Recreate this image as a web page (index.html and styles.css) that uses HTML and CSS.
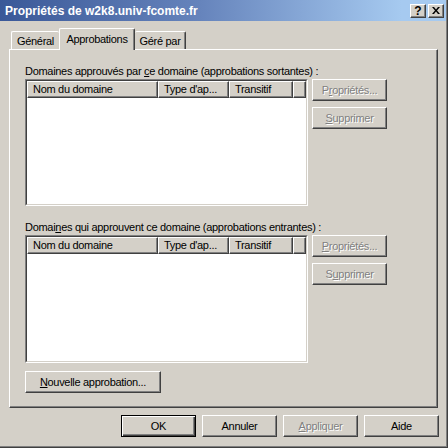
FILE: index.html
```html
<!DOCTYPE html>
<html>

<head>
    <meta charset="utf-8">
    <link rel="stylesheet" href="styles.css">
</head>

<body>
    <div id="window">
        <div id="titlebar">
            <span class="title">Propriétés de w2k8.univ-fcomte.fr</span>
            <div class="capbtns">
                <div class="capbtn help">?</div>
                <div class="capbtn close">
                    <svg width="8" height="7" viewBox="0 0 8 7">
                        <path d="M0 0h2l2 2.5L6 0h2L5 3.5 8 7H6L4 4.5 2 7H0l3-3.5z" fill="#000"/>
                    </svg>
                </div>
            </div>
        </div>

        <div id="tabs">
            <div class="tab tab-general">Général</div>
            <div class="tab tab-active">Approbations</div>
            <div class="tab tab-gere">Géré par</div>
        </div>

        <div id="panel">
            <p class="label">Domaines approuvés par <u>c</u>e domaine (approbations sortantes) :</p>
            <div class="row">
                <div class="list">
                    <div class="list-inner">
                        <div class="header">
                            <div class="col col-nom">Nom du domaine</div>
                            <div class="col col-type">Type d'ap...</div>
                            <div class="col col-trans">Transitif</div>
                            <div class="col col-rest"></div>
                        </div>
                    </div>
                </div>
                <div class="side">
                    <div class="btn disabled">P<u>r</u>opriétés...</div>
                    <div class="btn disabled"><u>S</u>upprimer</div>
                </div>
            </div>

            <p class="label label2">Domai<u>n</u>es qui approuvent ce domaine (approbations entrantes) :</p>
            <div class="row">
                <div class="list list2">
                    <div class="list-inner">
                        <div class="header">
                            <div class="col col-nom">Nom du domaine</div>
                            <div class="col col-type">Type d'ap...</div>
                            <div class="col col-trans">Transitif</div>
                            <div class="col col-rest"></div>
                        </div>
                    </div>
                </div>
                <div class="side">
                    <div class="btn disabled"><u>P</u>ropriétés...</div>
                    <div class="btn disabled">S<u>u</u>pprimer</div>
                </div>
            </div>

            <div class="btn btn-new"><u>N</u>ouvelle approbation...</div>
        </div>

        <div id="bottom">
            <div class="btn btn-default">OK</div>
            <div class="btn">Annuler</div>
            <div class="btn disabled"><u>A</u>ppliquer</div>
            <div class="btn">Aide</div>
        </div>
    </div>
</body>

</html>
```

FILE: styles.css
```css
body {
    margin: 0px;
    background: #d4d0c8;
    font-family: "Liberation Sans", Tahoma, sans-serif;
    font-size: 11px;
    letter-spacing: -0.3px;
    color: #000;
}

p {
    margin: 0px;
}

#window {
    width: 448px;
    height: 448px;
    box-sizing: border-box;
    border-right: 1px solid #404040;
    border-bottom: 1px solid #404040;
    box-shadow: inset -1px -1px #808080;
    display: flex;
    flex-direction: column;
}

#titlebar {
    height: 21px;
    margin-right: 1px;
    display: flex;
    align-items: center;
    justify-content: space-between;
    padding: 0px 2px 0px 5px;
    background: linear-gradient(to right, #3a5898 0%, #6684bc 45%, #a6caf0 90%);
    color: #fff;
    font-size: 12px;
    font-weight: bold;
    letter-spacing: 0px;
}

.capbtns {
    display: flex;
    gap: 2px;
}

.capbtn {
    width: 16px;
    height: 14px;
    box-sizing: border-box;
    background: #d4d0c8;
    border: 1px solid;
    border-color: #fff #404040 #404040 #fff;
    box-shadow: inset -1px -1px #808080;
    display: flex;
    align-items: center;
    justify-content: center;
    color: #000;
    font-size: 12px;
    font-weight: bold;
    line-height: 12px;
}

.close svg {
    display: block;
}

#tabs {
    display: flex;
    align-items: flex-end;
    height: 21px;
    margin-top: 7px;
    padding-left: 11px;
}

.tab {
    height: 18px;
    box-sizing: border-box;
    border: 1px solid;
    border-bottom: 0;
    border-color: #fff #404040 #fff #fff;
    border-radius: 2px 2px 0px 0px;
    box-shadow: inset -1px 0px #808080;
    display: flex;
    align-items: center;
    justify-content: center;
}

.tab-general {
    width: 48px;
    border-right: 0;
    box-shadow: none;
}

.tab-active {
    width: 76px;
    height: 22px;
    margin-bottom: -1px;
    background: #d4d0c8;
    position: relative;
    z-index: 1;
    padding-bottom: 2px;
}

.tab-gere {
    width: 51px;
    border-left: 0;
}

#panel {
    margin-left: 9px;
    width: 429px;
    height: 359px;
    box-sizing: border-box;
    border: 1px solid;
    border-color: #fff #404040 #404040 #fff;
    box-shadow: inset -1px -1px #808080;
    padding: 15px 0px 0px 15px;
}

.label {
    height: 13px;
    line-height: 13px;
    margin-bottom: 1px;
    white-space: nowrap;
}

.label2 {
    margin-top: 15px;
}

.row {
    display: flex;
    gap: 4px;
    align-items: flex-start;
}

.list {
    width: 283px;
    height: 127px;
    box-sizing: border-box;
    border: 1px solid;
    border-color: #808080 #fff #fff #808080;
}

.list2 {
    height: 128px;
}

.list-inner {
    height: 100%;
    box-sizing: border-box;
    border: 1px solid;
    border-color: #404040 #d4d0c8 #d4d0c8 #404040;
    background: #fff;
}

.header {
    display: flex;
    height: 17px;
}

.col {
    box-sizing: border-box;
    height: 17px;
    background: #d4d0c8;
    border: 1px solid;
    border-color: #fff #404040 #404040 #fff;
    box-shadow: inset -1px -1px #808080;
    padding-left: 5px;
    line-height: 14px;
    white-space: nowrap;
}

.col-nom {
    width: 131px;
}

.col-type {
    width: 71px;
}

.col-trans {
    width: 64px;
}

.col-rest {
    flex: 1;
}

.side {
    display: flex;
    flex-direction: column;
    gap: 6px;
}

.btn {
    width: 75px;
    height: 22px;
    box-sizing: border-box;
    border: 1px solid;
    border-color: #fff #404040 #404040 #fff;
    box-shadow: inset -1px -1px #808080;
    display: flex;
    align-items: center;
    justify-content: center;
    white-space: nowrap;
}

.disabled {
    color: #808080;
    text-shadow: 1px 1px #fff;
}

.btn-new {
    width: 136px;
    margin-top: 8px;
}

.btn-default {
    border-color: #000;
    box-shadow: inset 1px 1px #fff, inset -1px -1px #404040, inset -2px -2px #808080;
}

#bottom {
    display: flex;
    justify-content: flex-end;
    gap: 6px;
    padding: 7px 8px 0px 0px;
}
```
